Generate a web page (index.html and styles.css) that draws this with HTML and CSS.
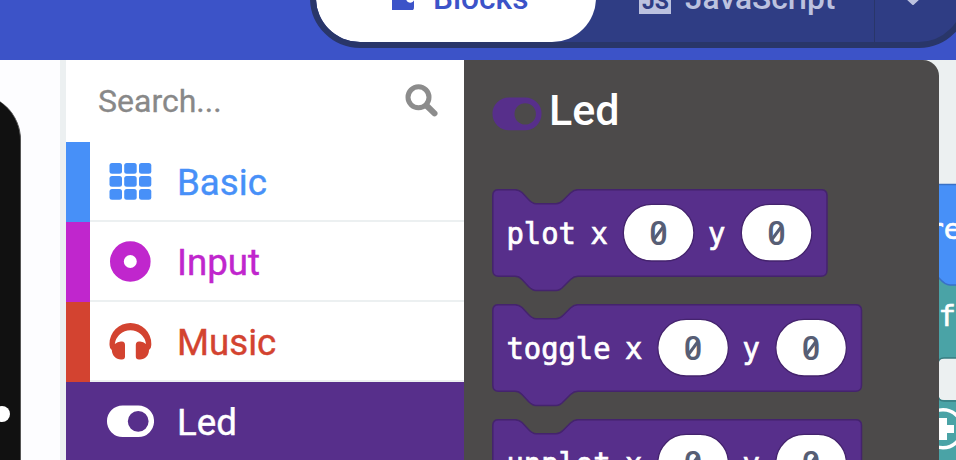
FILE: index.html
```
<!DOCTYPE html>
<html lang="en">
<head>
<meta charset="utf-8">
<title>Block editor</title>
<link rel="stylesheet" href="styles.css">
</head>
<body>
<header class="topbar">
  <nav class="switcher">
    <div class="tab tab-blocks">
      <svg class="puzzle" width="24" height="24" viewBox="0 0 24 24"><path d="M0 0H14V12C14 18 22 18 22 13H22V21Q22 24 21 24H0Z"/><circle cx="18.500" cy="11" r="4.500" fill="#fff"/></svg>
      <span>Blocks</span>
    </div>
    <div class="tab tab-js"><span class="js-logo">JS</span><span>JavaScript</span></div>
    <div class="tab-more"><svg width="20" height="10" viewBox="0 0 20 10"><path d="M2 0H18L11 6.500Q10 7.500 9 6.500Z"/></svg></div>
  </nav>
</header>
<main class="editor">
  <aside class="simulator"><div class="board"><span class="pin"></span></div></aside>
  <section class="toolbox">
    <div class="search"><span>Search...</span>
      <svg width="34" height="34" viewBox="0 0 34 34"><circle cx="13.500" cy="13.300" r="10.500" fill="none" stroke="#8c8c8c" stroke-width="5"/><path d="M22 22L29.500 29.300" stroke="#8c8c8c" stroke-width="6" stroke-linecap="round"/></svg>
    </div>
    <div class="category basic">
      <svg width="48" height="48" viewBox="0 0 48 48"><rect x="3.500" y="5" width="12.500" height="10.700" rx="2.500"/><rect x="18.200" y="5" width="12.500" height="10.700" rx="2.500"/><rect x="33" y="5" width="12.300" height="10.700" rx="2.500"/><rect x="3.500" y="18" width="12.500" height="10.700" rx="2.500"/><rect x="18.200" y="18" width="12.500" height="10.700" rx="2.500"/><rect x="33" y="18" width="12.300" height="10.700" rx="2.500"/><rect x="3.500" y="31" width="12.500" height="10.700" rx="2.500"/><rect x="18.200" y="31" width="12.500" height="10.700" rx="2.500"/><rect x="33" y="31" width="12.300" height="10.700" rx="2.500"/></svg>
      <span>Basic</span>
    </div>
    <div class="category input">
      <svg width="48" height="48" viewBox="0 0 48 48"><circle cx="24.300" cy="23.500" r="13.400" fill="none" stroke="currentColor" stroke-width="13.800"/></svg>
      <span>Input</span>
    </div>
    <div class="category music">
      <svg width="48" height="48" viewBox="0 0 48 48"><path d="M3.500 27V25.500A20.900 20.500 0 0 1 45.300 25.500V27Q45.300 30.500 43 32C43 37.500 39 41.500 34 41.500H33Q29.800 41.500 29.800 38.500V27Q29.800 23.500 33 23.500Q37 23 40 26A15.700 15.500 0 0 0 8.800 26Q12 23 16 23.500Q19 23.500 19 27V38.500Q19 41.500 16 41.500H15C10 41.500 6 37.500 5.800 32Q3.500 30.500 3.500 27Z"/></svg>
      <span>Music</span>
    </div>
    <div class="category led">
      <svg width="48" height="48" viewBox="0 0 48 48"><path fill-rule="evenodd" d="M16.700 7.500H32.300A15.700 15.700 0 0 1 32.300 39H16.700A15.700 15.700 0 0 1 16.700 7.500ZM32.200 12.900A10.400 10.400 0 1 0 32.200 33.700A10.400 10.400 0 1 0 32.200 12.900Z"/></svg>
      <span>Led</span>
    </div>
  </section>
  <section class="flyout">
    <h1 class="flyout-title">
      <svg width="50" height="34" viewBox="0 0 50 34"><path fill-rule="evenodd" d="M16.800 .5H33.200A16.300 16.300 0 0 1 33.200 33.200H16.800A16.300 16.300 0 0 1 16.800 .5ZM33.200 6.200A10.700 10.700 0 1 0 33.200 27.600A10.700 10.700 0 1 0 33.200 6.200Z"/></svg>
      <span>Led</span>
    </h1>
    <div class="blocks">
      <svg class="block" width="372" height="104" viewBox="0 0 372 104">
        <path class="shape" d="M.8 6.500Q.8 .7 6.500 .7H23Q27 .7 30 3.500L36.500 10.500Q40.500 14.700 44 14.700H64Q68 14.700 71.500 11L78.500 4Q82 .7 86 .7H329Q335 .7 335 6.500V81.300Q335 87.300 329 87.300H86Q82 87.300 78.500 90.500L71.500 97.500Q68 101.500 64 101.500H44Q40.500 101.500 36.500 97.500L30 90.500Q27 87.300 23 87.300H6.500Q.8 87.300 .8 81.300Z"/>
        <g transform="translate(0 55.300) scale(1 1.060)"><text x="14.500" y="0">plot</text><text x="98.500" y="0">x</text><text x="216" y="0">y</text></g>
        <rect class="field" x="131.300" y="15.400" width="70.600" height="56.600" rx="28.300"/><text class="value" x="166.500" y="55.700">0</text><path class="slash" d="M161.500 51L171.500 37.500"/>
        <rect class="field" x="249.300" y="15.400" width="70.600" height="56.600" rx="28.300"/><text class="value" x="284.500" y="55.700">0</text><path class="slash" d="M279.500 51L289.500 37.500"/>
      </svg>
      <svg class="block" width="372" height="104" viewBox="0 0 372 104">
        <path class="shape" d="M.8 6.500Q.8 .7 6.500 .7H23Q27 .7 30 3.500L36.500 10.500Q40.500 14.700 44 14.700H64Q68 14.700 71.500 11L78.500 4Q82 .7 86 .7H363.500Q369.500 .7 369.500 6.500V81.300Q369.500 87.300 363.500 87.300H86Q82 87.300 78.500 90.500L71.500 97.500Q68 101.500 64 101.500H44Q40.500 101.500 36.500 97.500L30 90.500Q27 87.300 23 87.300H6.500Q.8 87.300 .8 81.300Z"/>
        <g transform="translate(0 55.300) scale(1 1.060)"><text x="14.500" y="0">toggle</text><text x="133.100" y="0">x</text><text x="250.600" y="0">y</text></g>
        <rect class="field" x="165.800" y="15.400" width="70.600" height="56.600" rx="28.300"/><text class="value" x="201" y="55.700">0</text><path class="slash" d="M196 51L206 37.500"/>
        <rect class="field" x="283.800" y="15.400" width="70.600" height="56.600" rx="28.300"/><text class="value" x="319" y="55.700">0</text><path class="slash" d="M314 51L324 37.500"/>
      </svg>
      <svg class="block" width="372" height="104" viewBox="0 0 372 104">
        <path class="shape" d="M.8 6.500Q.8 .7 6.500 .7H23Q27 .7 30 3.500L36.500 10.500Q40.500 14.700 44 14.700H64Q68 14.700 71.500 11L78.500 4Q82 .7 86 .7H363.500Q369.500 .7 369.500 6.500V81.300Q369.500 87.300 363.500 87.300H6.500Q.8 87.300 .8 81.300Z"/>
        <g transform="translate(0 55.300) scale(1 1.060)"><text x="14.500" y="0">unplot</text><text x="133.100" y="0">x</text><text x="250.600" y="0">y</text></g>
        <rect class="field" x="165.800" y="15.400" width="70.600" height="56.600" rx="28.300"/><text class="value" x="201" y="55.700">0</text><path class="slash" d="M196 51L206 37.500"/>
        <rect class="field" x="283.800" y="15.400" width="70.600" height="56.600" rx="28.300"/><text class="value" x="319" y="55.700">0</text><path class="slash" d="M314 51L324 37.500"/>
      </svg>
    </div>
  </section>
  <svg class="workspace" width="37" height="400" viewBox="919 60 37 400">
    <path d="M919 270H956V358H944Q938 358 938 364V394Q938 400 944 400H956V460H919Z" fill="#4aa3a6"/>
    <path d="M956 358H944Q938 358 938 364M938 395Q938 401 944 401H956" fill="none" stroke="#397c80" stroke-width="1.500"/>
    <path d="M919 184.500H960V285H950Q945 285 939 278L919 260Z" fill="#4790f8" stroke="#3971c6" stroke-width="1.500"/>
    <text x="926.500" y="239">re</text><text x="938.500" y="325.500">f</text>
    <circle cx="943" cy="428.700" r="19" fill="none" stroke="#fff" stroke-width="3.500"/>
    <path d="M939 418H947V425H954V433H947V440H939V433H932V425H939Z" fill="#fff"/>
  </svg>
</main>
</body>
</html>
```
FILE: styles.css
```
* { box-sizing: border-box; }
body { margin: 0; width: 956px; height: 460px; overflow: hidden; font-family: Roboto, sans-serif; background: #ecf0f1; }
svg { display: block; flex: none; }
.topbar { height: 60px; background: #3c53c8; overflow: hidden; display: flex; align-items: flex-end; padding: 0 0 12px 310px; }
.switcher { flex: none; width: 659px; height: 100px; border: 6px solid #293669; border-radius: 50px; background: #2f3d84; display: flex; font-size: 31.700px; font-weight: 500; overflow: hidden; }
.tab { display: flex; align-items: center; height: 88px; }
.tab-blocks { width: 280px; border-radius: 44px; background: #fff; color: #3c53c8; padding-left: 76px; gap: 17px; }
.puzzle { fill: currentColor; }
.tab-js { width: 278px; padding-left: 43px; gap: 14px; color: #bcc2df; }
.js-logo { width: 32px; height: 32px; background: #bcc2df; color: #2f3d84; font: 700 23px/39px Roboto, sans-serif; text-align: right; padding-right: 2px; }
.tab-more { flex: 1; border-left: 1px solid #293669; padding: 44px 0 0 28px; fill: #bcc2df; }
.editor { height: 400px; display: grid; grid-template-columns: 66px 398px 475px 17px; overflow: hidden; }
.simulator { background: #fdfdff; border-right: 6px solid #ecf0f1; overflow: hidden; display: flex; padding-top: 34px; }
.board { flex: none; width: 101px; height: 500px; margin-left: -80px; border-radius: 50px 46px 0 0; background: #111; border-right: 1px solid #555; padding: 312px 0 0 74px; }
.pin { display: block; width: 16px; height: 16px; border-radius: 50%; background: #fff; }
.toolbox { background: #fff; }
.search { height: 82px; padding: 0 25px 0 32px; display: flex; align-items: center; justify-content: space-between; font-size: 32px; color: #888; -webkit-text-stroke: .3px #888; }
.category { height: 80px; display: flex; align-items: center; gap: 23px; padding-left: 16px; border-left: 24px solid currentColor; font-size: 36.700px; -webkit-text-stroke: .4px currentColor; background: linear-gradient(#ecf0f1, #ecf0f1) bottom / 100% 2px no-repeat; }
.category svg { fill: currentColor; }
.basic { color: #4790f8; }
.input { color: #c026cd; }
.music { color: #d34330; }
.led { color: #fff; border-color: #572f8b; background: #572f8b; }
.flyout { position: relative; z-index: 1; background: #4c4a4a; border-top-right-radius: 16px; padding: 0 28px; overflow: hidden; }
.flyout-title { margin: 0; height: 129px; padding-top: 25px; display: flex; align-items: flex-start; gap: 7px; font-size: 43px; line-height: 51px; font-weight: 500; color: #fff; }
.flyout-title svg { fill: #572f8b; margin-top: 12px; }
.blocks { display: grid; gap: 11px; }
.block text, .workspace text { font: 400 28.800px "DejaVu Sans Mono", monospace; fill: #fff; stroke: #fff; stroke-width: .7px; }
.block text.value { font: 500 32.500px Roboto, sans-serif; text-anchor: middle; fill: #575e75; stroke: none; }
.slash { fill: none; stroke: #575e75; stroke-width: 3px; }
.shape { fill: #572f8b; stroke: #44236d; stroke-width: 1.500px; }
.field { fill: #fff; stroke: #44236d; stroke-width: 1.300px; }
.workspace { margin-left: -20px; }
```
